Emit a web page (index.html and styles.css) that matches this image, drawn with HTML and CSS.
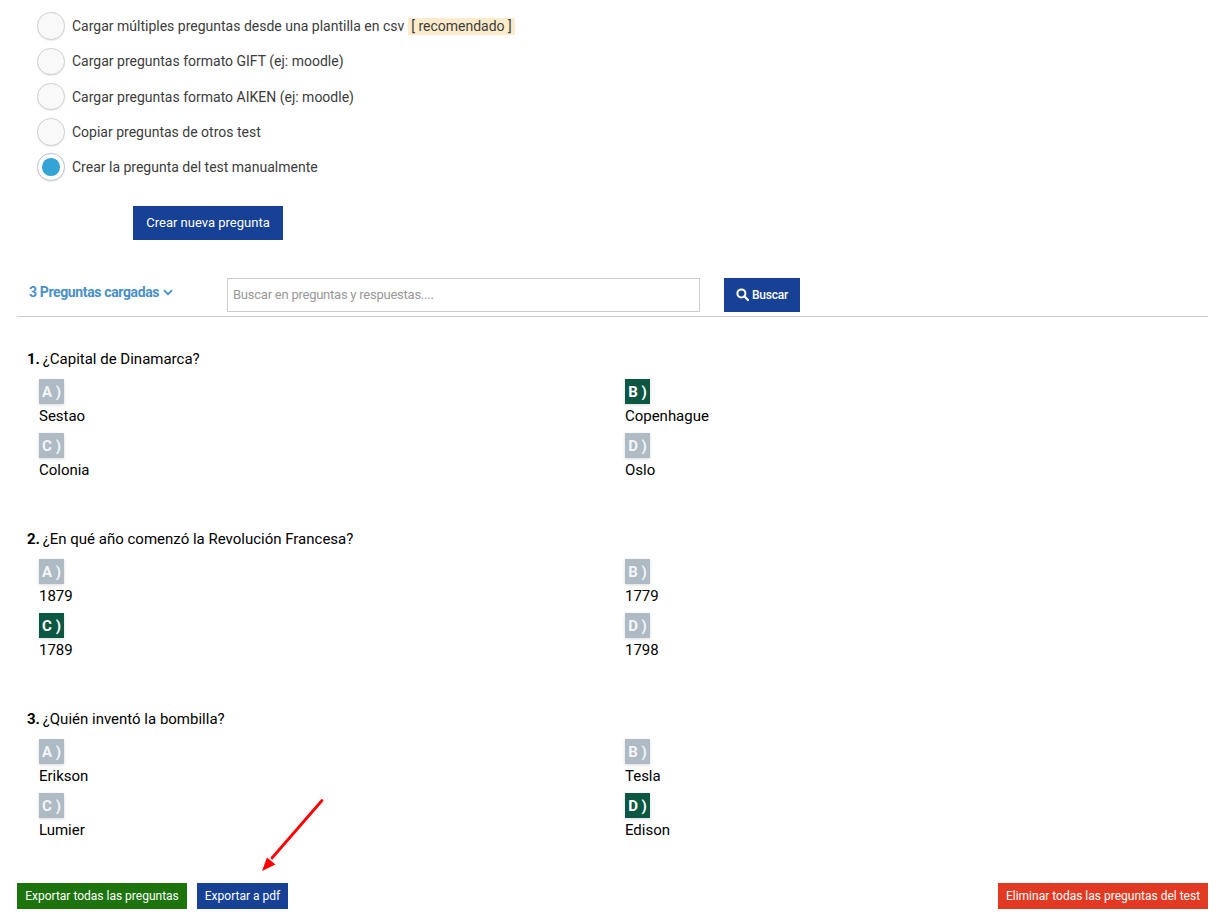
FILE: index.html
```html
<!DOCTYPE html>
<html lang="es">
<head>
<meta charset="utf-8">
<title>Preguntas del test</title>
<link rel="stylesheet" href="styles.css">
</head>
<body>
<main class="page">
  <ul class="radios">
    <li class="radio-row"><span class="radio"></span><span>Cargar múltiples preguntas desde una plantilla en csv</span><mark class="tag">[ recomendado ]</mark></li>
    <li class="radio-row"><span class="radio"></span><span>Cargar preguntas formato GIFT (ej: moodle)</span></li>
    <li class="radio-row"><span class="radio"></span><span>Cargar preguntas formato AIKEN (ej: moodle)</span></li>
    <li class="radio-row"><span class="radio"></span><span>Copiar preguntas de otros test</span></li>
    <li class="radio-row"><span class="radio radio-on"></span><span>Crear la pregunta del test manualmente</span></li>
  </ul>
  <div class="create-wrap"><button class="btn btn-create">Crear nueva pregunta</button></div>

  <div class="search-row">
    <div class="loaded">3 Preguntas cargadas
      <svg class="chev" width="10" height="7" viewBox="0 0 10 7"><path d="M1 1.2 5 5.2 9 1.2" fill="none" stroke="#4a90c8" stroke-width="1.8"/></svg>
    </div>
    <input class="search" type="text" placeholder="Buscar en preguntas y respuestas....">
    <button class="btn btn-search">
      <svg width="13" height="13" viewBox="0 0 13 13"><circle cx="5.4" cy="5.4" r="4" fill="none" stroke="#fff" stroke-width="2"/><path d="M8.3 8.3 12 12" stroke="#fff" stroke-width="2.2" stroke-linecap="round"/></svg>
      Buscar
    </button>
  </div>

  <section class="question">
    <p class="q-title"><b>1.</b> ¿Capital de Dinamarca?</p>
    <div class="answers">
      <div class="answer"><span class="badge">A )</span><span class="a-text">Sestao</span></div>
      <div class="answer"><span class="badge badge-ok">B )</span><span class="a-text">Copenhague</span></div>
      <div class="answer"><span class="badge">C )</span><span class="a-text">Colonia</span></div>
      <div class="answer"><span class="badge">D )</span><span class="a-text">Oslo</span></div>
    </div>
  </section>
  <section class="question">
    <p class="q-title"><b>2.</b> ¿En qué año comenzó la Revolución Francesa?</p>
    <div class="answers">
      <div class="answer"><span class="badge">A )</span><span class="a-text">1879</span></div>
      <div class="answer"><span class="badge">B )</span><span class="a-text">1779</span></div>
      <div class="answer"><span class="badge badge-ok">C )</span><span class="a-text">1789</span></div>
      <div class="answer"><span class="badge">D )</span><span class="a-text">1798</span></div>
    </div>
  </section>
  <section class="question">
    <p class="q-title"><b>3.</b> ¿Quién inventó la bombilla?</p>
    <div class="answers">
      <div class="answer"><span class="badge">A )</span><span class="a-text">Erikson</span></div>
      <div class="answer"><span class="badge">B )</span><span class="a-text">Tesla</span></div>
      <div class="answer"><span class="badge">C )</span><span class="a-text">Lumier</span></div>
      <div class="answer"><span class="badge badge-ok">D )</span><span class="a-text">Edison</span></div>
    </div>
  </section>

  <div class="footer-row">
    <button class="btn btn-small btn-green">Exportar todas las preguntas</button>
    <button class="btn btn-small btn-blue">Exportar a pdf</button>
    <button class="btn btn-small btn-red">Eliminar todas las preguntas del test</button>
  </div>
  <svg class="arrow" width="70" height="80" viewBox="0 0 70 80">
    <path d="M65 3.5 15 61" stroke="#f00" stroke-width="2.8" stroke-linecap="round"/>
    <path d="M5 74 10 60.5 18.5 67.5Z" fill="#f00"/>
  </svg>
</main>
</body>
</html>
```

FILE: styles.css
```css
* { box-sizing: border-box; }
html, body { margin: 0; padding: 0; background: #fff; }
body { font-family: Roboto, "Liberation Sans", sans-serif; color: #000; overflow: hidden; }
.page { position: relative; width: 1230px; height: 918px; padding: 8.6px 22px 0 17px; }

.radios { list-style: none; margin: 0; padding: 0 0 0 20px; }
.radio-row { display: flex; align-items: center; height: 35.25px; font-size: 14px; color: #3c3c3c; }
.radio { width: 27.5px; height: 27.5px; border-radius: 50%; margin-right: 7.5px; border: 1px solid #cfcfcf; background: #f9f9f9; box-shadow: 0 1px 1px rgba(0,0,0,.08); flex: none; }
.radio-on { position: relative; background: #fff; border-color: #b9c0cc; }
.radio-on::after { content: ""; position: absolute; left: 4px; top: 4px; width: 17.5px; height: 17.5px; border-radius: 50%; background: #34a3d6; }
.tag { margin-left: 4px; padding: 0 3px; background: #fdeccb; color: #3c3c3c; line-height: 17px; }

.create-wrap { padding: 21px 0 0 116px; }
.btn { border: 0; color: #fff; font-family: inherit; display: inline-flex; align-items: center; justify-content: center; padding: 0; }
.btn-create { width: 150px; height: 34px; background: #164194; font-size: 13px; font-weight: 400; }

.search-row { display: flex; align-items: flex-start; height: 39px; margin-top: 38px; border-bottom: 1px solid #ccc; }
.loaded { width: 210px; padding: 6px 0 0 12px; color: #4a90c8; font-size: 14px; font-weight: 700; line-height: 17px; white-space: nowrap; letter-spacing: -.37px; }
.chev { vertical-align: 1px; margin-left: 1px; }
.search { width: 473px; height: 34px; border: 1px solid #ccc; padding: 0 5px; font-family: inherit; font-size: 13px; outline: 0; letter-spacing: -.24px; }
.search::placeholder { color: #999; opacity: 1; }
.btn-search { width: 76px; height: 34px; margin-left: 24px; gap: 3px; background: #164194; font-size: 12px; font-weight: 500; letter-spacing: -.2px; }

.question { padding: 0 0 0 10px; margin-top: 32px; height: 148px; }
.q-title { margin: 0 0 10px; font-size: 15px; line-height: 20px; color: #000; }
.q-title b { font-weight: 700; margin-right: -1px; }
.answers { display: grid; grid-template-columns: 586px 1fr; padding-left: 12px; }
.answer { display: flex; flex-direction: column; align-items: flex-start; height: 54px; }
.badge { width: 25px; height: 25px; padding-top: 1px; display: flex; align-items: center; justify-content: center; background: #aebac4; color: #f3f5f6; font-size: 15px; font-weight: 700; box-shadow: 0 1px 3px rgba(0,0,0,.15); white-space: nowrap; }
.badge-ok { background: #0b5743; color: #fff; }
.a-text { font-size: 15px; line-height: 24px; color: #000; letter-spacing: -.02px; }

.footer-row { display: flex; gap: 10px; position: absolute; left: 17px; right: 22px; top: 883px; }
.btn-small { height: 26px; font-size: 12px; font-weight: 400; }
.btn-green { width: 170px; background: #1d730c; }
.btn-blue { width: 91px; background: #164194; }
.btn-red { width: 210px; background: #e23a22; margin-left: auto; }

.arrow { position: absolute; left: 257px; top: 797px; }
```
